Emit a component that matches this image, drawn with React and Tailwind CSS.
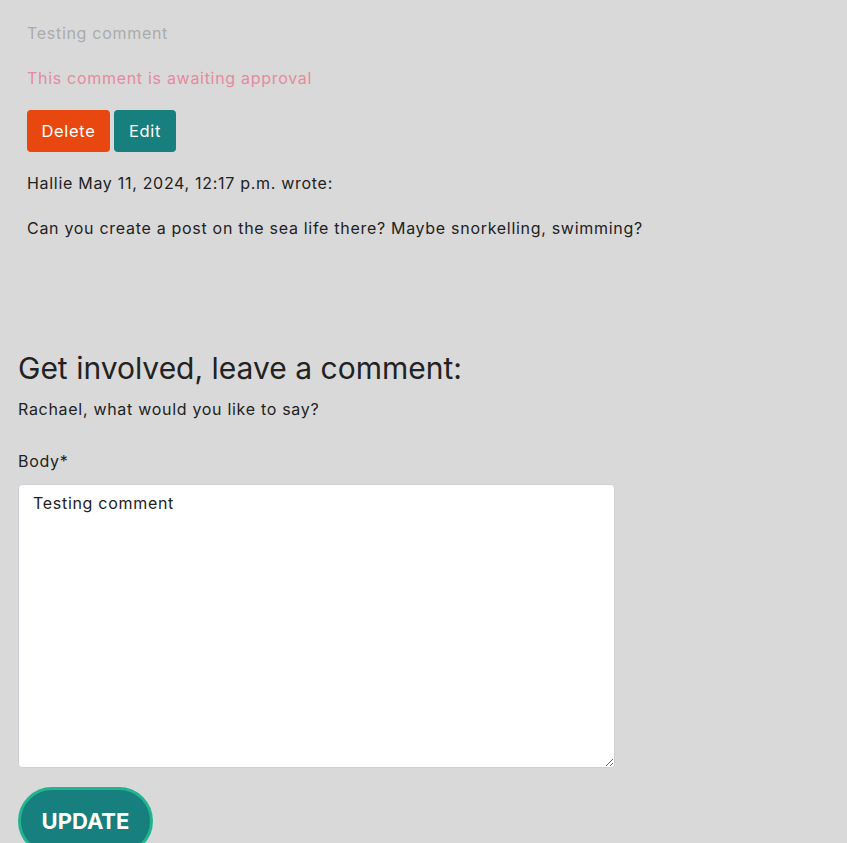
export default function App() {
  return (
    <div className="min-h-[843px] w-full bg-[#d9d9d9] text-[#222] overflow-hidden" style={{ fontFamily: "Inter, 'Open Sans', sans-serif" }}>
      <div className="px-[27px] pt-[22px] tracking-[0.7px]">
        <p className="text-[16px] leading-[22px] text-[#a9abad]">Testing comment</p>
        <p className="mt-[23px] text-[16px] leading-[22px] text-[#e58aa0]">This comment is awaiting approval</p>
        <div className="mt-[21px] flex gap-[4px]">
          <button className="h-[42px] w-[83px] rounded-[4px] bg-[#e8470f] text-[16.5px] text-white">Delete</button>
          <button className="h-[42px] w-[62px] rounded-[4px] bg-[#177f7d] text-[16.5px] text-white">Edit</button>
        </div>
        <p className="mt-[20px] text-[16px] leading-[22px] text-[#222]">Hallie May 11, 2024, 12:17 p.m. wrote:</p>
        <p className="mt-[23px] text-[16px] leading-[22px] text-[#222]">Can you create a post on the sea life there? Maybe snorkelling, swimming?</p>
      </div>
      <div className="px-[18px] pt-[111px]">
        <h3 className="text-[30px] leading-[36px] text-[#222]">Get involved, leave a comment:</h3>
        <p className="mt-[12px] text-[16px] leading-[22px] tracking-[0.7px]">Rachael, what would you like to say?</p>
        <label className="mt-[30px] block text-[16px] leading-[22px] tracking-[0.7px]">Body*</label>
        <textarea
          className="mt-[12px] block h-[284px] w-[597px] resize-y rounded-[4px] border border-[#ccd0d4] bg-white px-[14px] py-[7px] text-[16px] leading-[22px] tracking-[0.7px] text-[#222] outline-none"
          defaultValue="Testing comment"
          style={{ fontFamily: "Inter, 'Open Sans', sans-serif" }}
        />
        <button className="mt-[19px] h-[68px] w-[135px] rounded-full border-[3px] border-[#22b48e] bg-[#177f7d] text-[22px] font-bold text-white">UPDATE</button>
      </div>
    </div>
  );
}
